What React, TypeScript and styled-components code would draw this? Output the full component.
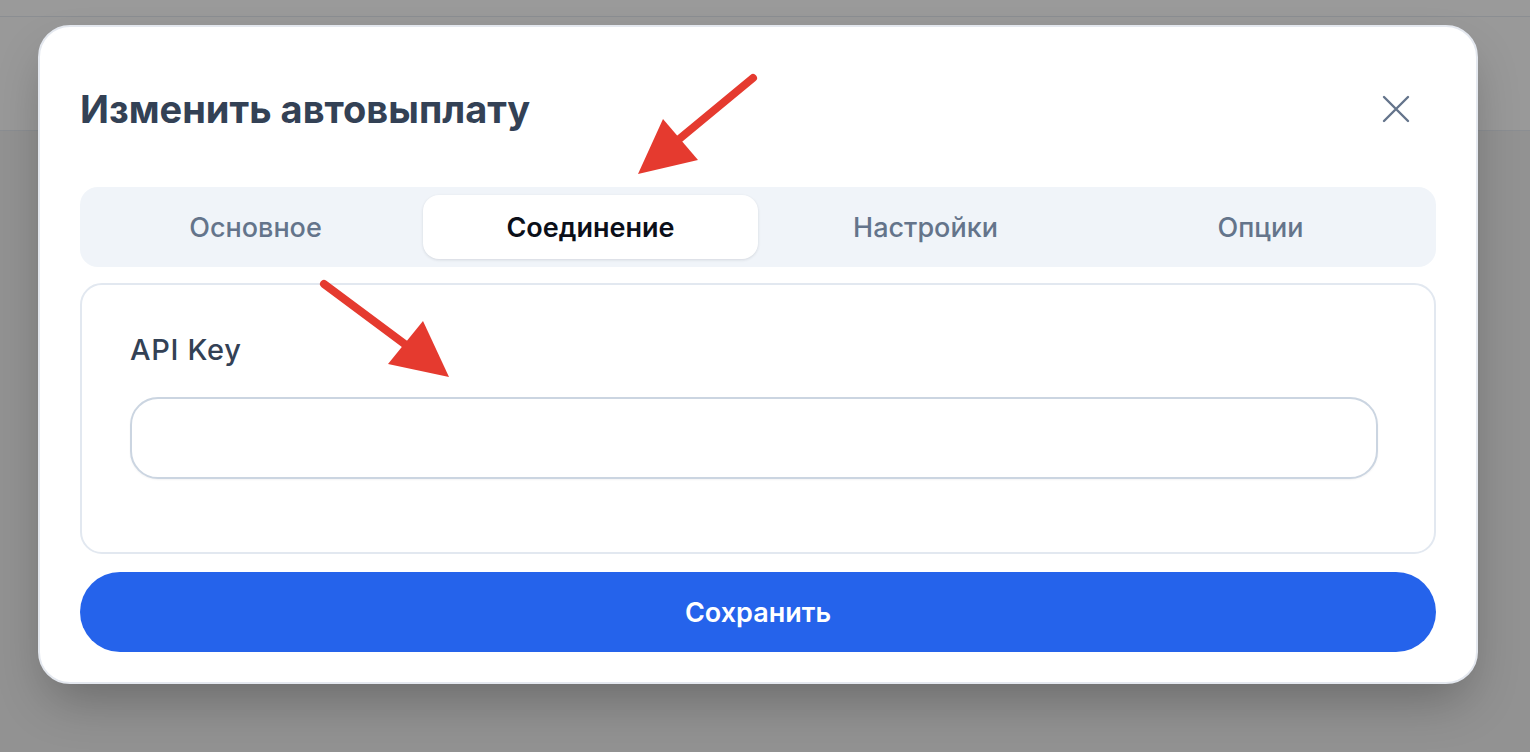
import React from "react";
import styled, { createGlobalStyle } from "styled-components";

const Global = createGlobalStyle`
  html, body { margin: 0; padding: 0; }
  body {
    width: 1530px;
    height: 752px;
    overflow: hidden;
    background: #929292;
    font-family: Inter, "Noto Sans", "Liberation Sans", sans-serif;
  }
`;

const Page = styled.div`
  position: relative;
  width: 1530px;
  height: 752px;
  display: flex;
  flex-direction: column;
  background: #919191;
`;

const TopBar = styled.div`
  height: 16px;
  background: #9a9a9a;
  border-bottom: 1px solid #8b8e92;
`;

const SubBar = styled.div`
  height: 113px;
  background: #999999;
  border-bottom: 1px solid #8b8e92;
`;

const Rest = styled.div`
  flex: 1;
  background: #929292;
`;

const Overlay = styled.div`
  position: absolute;
  inset: 0;
  padding: 25px 0 0 38px;
  display: flex;
  align-items: flex-start;
`;

const Modal = styled.div`
  width: 1440px;
  box-sizing: border-box;
  background: #ffffff;
  border: 2px solid #e4e8ef;
  border-radius: 32px;
  padding: 58px 40px 30px 40px;
  display: flex;
  flex-direction: column;
  box-shadow: 0 24px 50px -10px rgba(0, 0, 0, 0.28);
`;

const Header = styled.div`
  display: flex;
  align-items: center;
  justify-content: space-between;
  height: 48px;
`;

const Title = styled.h2`
  margin: 0;
  font-size: 38px;
  font-weight: 700;
  letter-spacing: 0;
  color: #334155;
`;

const CloseButton = styled.button`
  border: none;
  background: transparent;
  padding: 0;
  margin-right: 26px;
  width: 28px;
  height: 28px;
  display: flex;
  align-items: center;
  justify-content: center;
  color: #64748b;
  cursor: pointer;
`;

const TabList = styled.div`
  margin-top: 54px;
  background: #f0f4f9;
  border-radius: 18px;
  padding: 8px;
  display: grid;
  grid-template-columns: repeat(4, 1fr);
  height: 80px;
  box-sizing: border-box;
`;

const Tab = styled.button<{ $active?: boolean }>`
  border: none;
  border-radius: 16px;
  font-family: inherit;
  font-size: 27px;
  font-weight: ${(p) => (p.$active ? 600 : 500)};
  color: ${(p) => (p.$active ? "#0b0f19" : "#64748b")};
  background: ${(p) => (p.$active ? "#ffffff" : "transparent")};
  box-shadow: ${(p) => (p.$active ? "0 1px 3px rgba(15, 23, 42, 0.12)" : "none")};
  cursor: pointer;
`;

const Card = styled.div`
  margin-top: 16px;
  border: 2px solid #e2e8f0;
  border-radius: 22px;
  padding: 48px 56px 73px 48px;
  display: flex;
  flex-direction: column;
`;

const Label = styled.label`
  font-size: 29px;
  font-weight: 500;
  letter-spacing: 0.7px;
  color: #334155;
  line-height: 34px;
`;

const Input = styled.input`
  margin-top: 30px;
  height: 82px;
  box-sizing: border-box;
  border: 2px solid #cbd5e1;
  border-radius: 28px;
  padding: 0 24px;
  font-family: inherit;
  font-size: 24px;
  outline: none;
  box-shadow: 0 1px 2px rgba(15, 23, 42, 0.05);
`;

const SaveButton = styled.button`
  margin-top: 18px;
  height: 80px;
  border: none;
  border-radius: 40px;
  background: #2563eb;
  color: #ffffff;
  font-family: inherit;
  font-size: 27px;
  font-weight: 600;
  cursor: pointer;
`;

const Annotations = styled.svg`
  position: absolute;
  left: 0;
  top: 0;
  pointer-events: none;
`;

const tabs = ["Основное", "Соединение", "Настройки", "Опции"];

export default function App() {
  return (
    <>
      <Global />
      <Page>
        <TopBar />
        <SubBar />
        <Rest />
        <Overlay>
          <Modal>
            <Header>
              <Title>Изменить автовыплату</Title>
              <CloseButton aria-label="Закрыть">
                <svg width="28" height="28" viewBox="0 0 28 28" fill="none">
                  <path d="M2 2L26 26M26 2L2 26" stroke="currentColor" strokeWidth="2.4" strokeLinecap="round" />
                </svg>
              </CloseButton>
            </Header>
            <TabList>
              {tabs.map((t, i) => (
                <Tab key={t} $active={i === 1}>
                  {t}
                </Tab>
              ))}
            </TabList>
            <Card>
              <Label>API Key</Label>
              <Input />
            </Card>
            <SaveButton>Сохранить</SaveButton>
          </Modal>
        </Overlay>
        <Annotations width="1530" height="752" viewBox="0 0 1530 752">
          <line x1="753" y1="78" x2="672" y2="145" stroke="#e53a2f" strokeWidth="8" strokeLinecap="round" />
          <polygon points="638,174 663,119 698,160" fill="#e53a2f" />
          <line x1="324" y1="284" x2="410" y2="348" stroke="#e53a2f" strokeWidth="8" strokeLinecap="round" />
          <polygon points="449,377 423,321 388,364" fill="#e53a2f" />
        </Annotations>
      </Page>
    </>
  );
}
